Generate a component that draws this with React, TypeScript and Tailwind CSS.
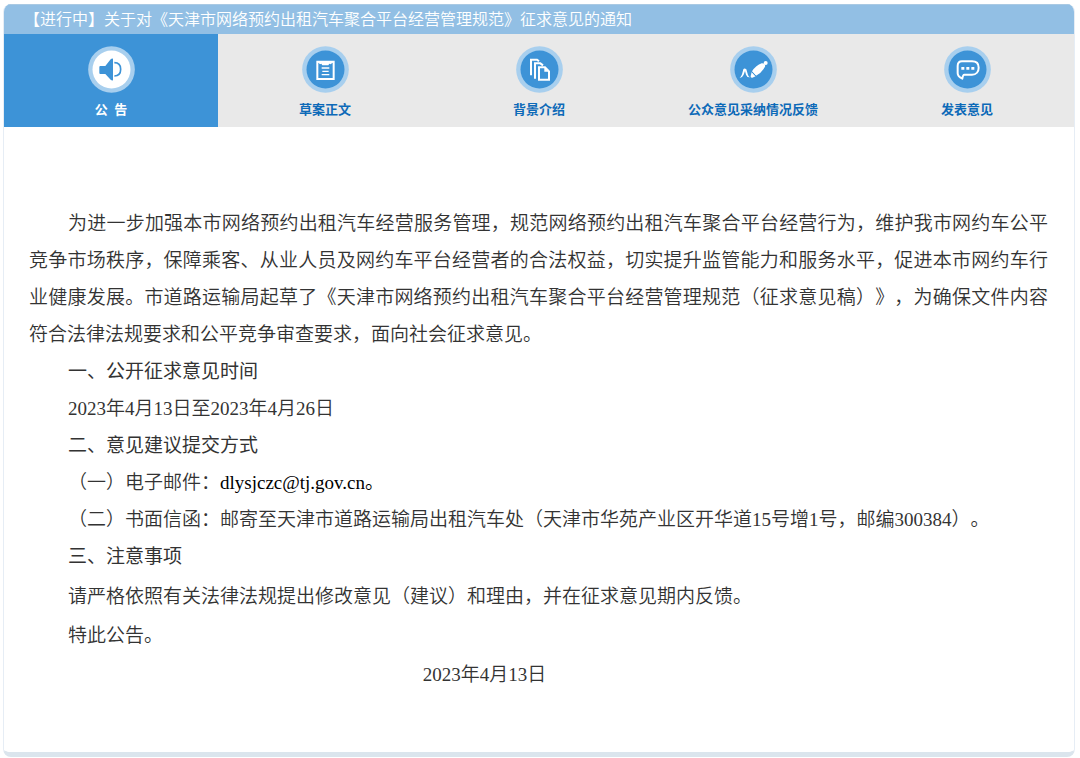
import clsx from "clsx";
import { ReactNode, useState } from "react";

type IconProps = {
  active: boolean;
  children: ReactNode;
};

function RoundIcon({ active, children }: IconProps) {
  return (
    <svg
      viewBox="20 16 141 141"
      className={clsx(
        "size-[47px] shrink-0",
        active ? "text-[#3d93d7]" : "text-white"
      )}
      fill="none"
      stroke="currentColor"
      strokeWidth="6"
      aria-hidden="true"
    >
      <circle cx="90.5" cy="86.5" r="70" fill="#a8cfee" stroke="none" />
      <circle
        cx="90.5"
        cy="86.5"
        r="57"
        fill={active ? "#ffffff" : "#3d93d7"}
        stroke="none"
      />
      {children}
    </svg>
  );
}

const tabs = [
  {
    label: "公  告",
    icon: (
      <>
        <path
          d="M57 76h15l16-20q3-3 7-2v65q-4 1-7-2l-16-17H57q-3 0-3-3V79q0-3 3-3z"
          fill="currentColor"
          stroke="none"
        />
        <path d="M99 66c12 0 19 5 19 20s-7 20-19 20" strokeWidth="5" />
      </>
    ),
  },
  {
    label: "草案正文",
    icon: (
      <>
        <path d="M66 63h49v52H66z" />
        <path
          d="M67 64h47l-8 7-4-2-3 5H81l-3-5-4 2z"
          fill="currentColor"
          stroke="none"
        />
        <path d="M79 82h23M81 92h19M79 102h23" strokeWidth="4" />
      </>
    ),
  },
  {
    label: "背景介绍",
    icon: (
      <>
        <path d="M65 104V57h18l6 5" strokeWidth="6" />
        <path d="M77 114V68h16l8 6" strokeWidth="6" />
        <path d="M89 80h18l12 12v25H89z" strokeWidth="6" />
        <path d="M105 80v13h14z" fill="currentColor" stroke="none" />
      </>
    ),
  },
  {
    label: "公众意见采纳情况反馈",
    icon: (
      <>
        <path
          d="M49 112c7-5 8-16 11-26q3-5 9 0l5 17q2 5 6 7-9 1-12-8l-3-11-4 11q-4 9-12 10z"
          fill="currentColor"
          stroke="none"
        />
        <path
          d="M86 92q12-18 29-24 6-1 9 3 3 4 0 9-10 17-26 25z"
          fill="currentColor"
          stroke="none"
        />
        <path
          d="M85 94l12 13-10 4q-6 1-5-5z"
          fill="currentColor"
          stroke="none"
        />
        <circle cx="127" cy="67" r="6" fill="currentColor" stroke="none" />
        <path d="M84 92l16 17" stroke="#3d93d7" strokeWidth="3" />
      </>
    ),
  },
  {
    label: "发表意见",
    icon: (
      <>
        <path
          d="M74 62h30c14 0 20 7 20 19s-7 21-20 21H81c-4 0-5 5-6 12-9-4-14-8-14-16V76c0-9 4-14 13-14z"
          strokeWidth="6"
          strokeLinejoin="round"
        />
        <path d="M72 83h9M87 83h9M102 83h9" strokeWidth="8" />
      </>
    ),
  },
];

export default function App() {
  const [current, setCurrent] = useState(0);

  return (
    <div className="bg-white pt-1 pr-[5px] pb-px pl-[3px] font-['Liberation_Serif','Noto_Sans_CJK_SC',sans-serif] [text-spacing-trim:space-all]">
      <main
        lang="zh-CN"
        className="overflow-hidden rounded-lg border-x border-b-5 border-x-[#e6edf5] border-b-[#dbe5ed]"
      >
        <h1 className="h-[30px] border-t border-[#a9c9e3] bg-[#92bfe4] pl-5 text-base leading-[30px] font-[350] text-white">
          【进行中】关于对《天津市网络预约出租汽车聚合平台经营管理规范》征求意见的通知
        </h1>

        <nav className="grid grid-cols-5 bg-[#e9e9e9]">
          {tabs.map((tab, i) => (
            <button
              key={tab.label}
              type="button"
              onClick={() => setCurrent(i)}
              className={clsx(
                "flex flex-col items-center gap-[7px] pt-3 pb-[7px] text-[13px] leading-5 font-bold",
                i === current ? "bg-[#3d93d7] text-white" : "text-[#0d6ab8]"
              )}
            >
              <RoundIcon active={i === current}>{tab.icon}</RoundIcon>
              <span className="whitespace-pre">{tab.label}</span>
            </button>
          ))}
        </nav>

        <article className="bg-white pt-[78px] pr-[26px] pb-[58px] pl-[25px] text-[19px] font-[350] text-[#333333]">
          <div className="mb-0.5 indent-[39px] leading-[37px]">
            <p className="text-justify">
              为进一步加强本市网络预约出租汽车经营服务管理，规范网络预约出租汽车聚合平台经营行为，维护我市网约车公平竞争市场秩序，保障乘客、从业人员及网约车平台经营者的合法权益，切实提升监管能力和服务水平，促进本市网约车行业健康发展。市道路运输局起草了《天津市网络预约出租汽车聚合平台经营管理规范（征求意见稿）》，为确保文件内容符合法律法规要求和公平竞争审查要求，面向社会征求意见。
            </p>
            <h2 className="font-normal">一、公开征求意见时间</h2>
            <p>2023年4月13日至2023年4月26日</p>
            <h2 className="font-normal">二、意见建议提交方式</h2>
            <p>
              （一）电子邮件：
              <span className="text-black">dlysjczc@tj.gov.cn。</span>
            </p>
            <p>
              （二）书面信函：邮寄至天津市道路运输局出租汽车处（天津市华苑产业区开华道15号增1号，邮编300384）。
            </p>
            <h2 className="font-normal">三、注意事项</h2>
          </div>
          <div className="leading-[39px]">
            <p className="indent-[39px]">
              请严格依照有关法律法规提出修改意见（建议）和理由，并在征求意见期内反馈。
            </p>
            <p className="indent-[39px]">特此公告。</p>
            <p className="pr-27 text-center">2023年4月13日</p>
          </div>
        </article>
      </main>
    </div>
  );
}
